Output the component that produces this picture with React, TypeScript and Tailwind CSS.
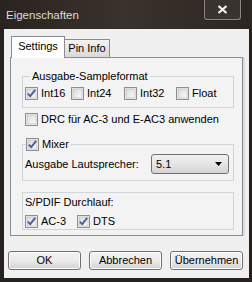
import React from "react";

const FONT = "font-['Liberation_Sans',Arial,sans-serif]";

function CheckBox({ checked }: { checked: boolean }) {
  return (
    <svg width="13" height="13" viewBox="0 0 13 13" className="shrink-0">
      <defs>
        <linearGradient id="cbg" x1="0" y1="0" x2="1" y2="1">
          <stop offset="0" stopColor="#d9dadb" />
          <stop offset="1" stopColor="#fbfbfb" />
        </linearGradient>
      </defs>
      <rect x="0.5" y="0.5" width="12" height="12" fill="#f4f4f4" stroke="#8e8f8f" />
      <rect x="2" y="2" width="9" height="9" fill="url(#cbg)" stroke="#aeb3b9" strokeWidth="0.6" />
      {checked && (
        <path d="M2.8 6.6 L5.2 9.2 L10.2 2.8" fill="none" stroke="#4a5e95" strokeWidth="1.9" strokeLinejoin="round" />
      )}
    </svg>
  );
}

function Check({ label, checked = false, className = "" }: { label: string; checked?: boolean; className?: string }) {
  return (
    <label className={`flex items-center gap-[3px] leading-[13px] ${className}`}>
      <CheckBox checked={checked} />
      <span>{label}</span>
    </label>
  );
}

function Button({ children }: { children: React.ReactNode }) {
  return (
    <button className="h-[19px] w-[73px] rounded-[3px] border border-[#707070] bg-gradient-to-b from-[#f2f2f2] via-[#ebebeb] to-[#d2d2d2] text-[11px] leading-[15px] text-black shadow-[inset_0_0_0_1px_#fcfcfc]">
      {children}
    </button>
  );
}

export default function App() {
  return (
    <div className={`flex h-[282px] w-[252px] flex-col bg-[#26211e] text-[11px] text-black ${FONT}`}>
      {/* title bar */}
      <div className="flex h-[29px] items-start bg-gradient-to-r from-[#2a2420] via-[#3a322c] to-[#2c2622]">
        <span className="pl-[6px] pt-[8px] text-[11.5px] leading-[14px] text-[#dcdcdc]">Eigenschaften</span>
        <div className="ml-auto mr-[11px] flex h-[20px] w-[37px] items-center justify-center rounded-b-[3px] border border-t-0 border-[#8c8782] bg-[#3a332e] shadow-[0_0_0_1px_#2a2521]">
          <svg width="11" height="9" viewBox="0 0 11 9">
            <path d="M1.5 1 L9.5 8 M9.5 1 L1.5 8" stroke="#f4f4f4" strokeWidth="2.2" />
          </svg>
        </div>
      </div>

      {/* client area */}
      <div className="ml-[4px] mr-[3px] flex h-[249px] flex-col bg-[#f0f0f0]">
        {/* tabs */}
        <div className="ml-[7px] mt-[7px] flex items-end">
          <div className="relative z-10 -mb-px flex h-[22px] w-[54px] items-center justify-center border border-b-0 border-[#898c95] bg-white pb-[2px]">
            Settings
          </div>
          <div className="-ml-px flex h-[18px] w-[46px] items-center justify-center border border-b-0 border-[#898c95] bg-gradient-to-b from-[#f2f2f2] to-[#d9d9d9]">
            Pin Info
          </div>
        </div>

        {/* panel */}
        <div className="ml-[6px] flex h-[179px] w-[233px] flex-col border border-[#898c95] bg-[#f3f3f3] shadow-[2px_0_0_#dcdcdc]">
          <fieldset className="ml-[11px] mt-[12px] w-[212px] border border-[#cfd6da] pb-[7px] pl-[2px]">
            <legend className="ml-[5px] px-[2px] leading-[13px]">Ausgabe-Sampleformat</legend>
            <div className="mt-[4px] flex">
              <Check label="Int16" checked className="w-[46px]" />
              <Check label="Int24" className="w-[53px]" />
              <Check label="Int32" className="w-[52px]" />
              <Check label="Float" />
            </div>
          </fieldset>

          <Check label="DRC für AC-3 und E-AC3 anwenden" className="ml-[14px] mt-[5px]" />

          <fieldset className="ml-[11px] mt-[12px] w-[212px] border border-[#cfd6da] pb-[6px] pl-[2px] pr-[4px]">
            <legend className="ml-px pr-[2px]">
              <Check label="Mixer" checked />
            </legend>
            <div className="mt-[3px] flex items-center justify-between">
              <span className="leading-[13px]">Ausgabe Lautsprecher:</span>
              <div className="flex h-[20px] w-[78px] items-center justify-between rounded-[3px] border border-[#707070] bg-gradient-to-b from-[#f2f2f2] to-[#d6d6d6] pl-[4px] pr-[6px]">
                <span>5.1</span>
                <svg width="7" height="4" viewBox="0 0 7 4">
                  <path d="M0 0 H7 L3.5 4 Z" fill="#000" />
                </svg>
              </div>
            </div>
          </fieldset>

          <div className="ml-[11px] mt-[11px] flex w-[212px] flex-col border border-[#cfd6da] pb-[1px] pl-[2px] pt-[3px]">
            <span className="leading-[13px]">S/PDIF Durchlauf:</span>
            <div className="mt-[6px] flex">
              <Check label="AC-3" checked className="w-[52px]" />
              <Check label="DTS" checked />
            </div>
          </div>
        </div>

        {/* buttons */}
        <div className="ml-[4px] mt-[15px] flex gap-[8px]">
          <Button>OK</Button>
          <Button>Abbrechen</Button>
          <Button>Übernehmen</Button>
        </div>
      </div>
    </div>
  );
}
